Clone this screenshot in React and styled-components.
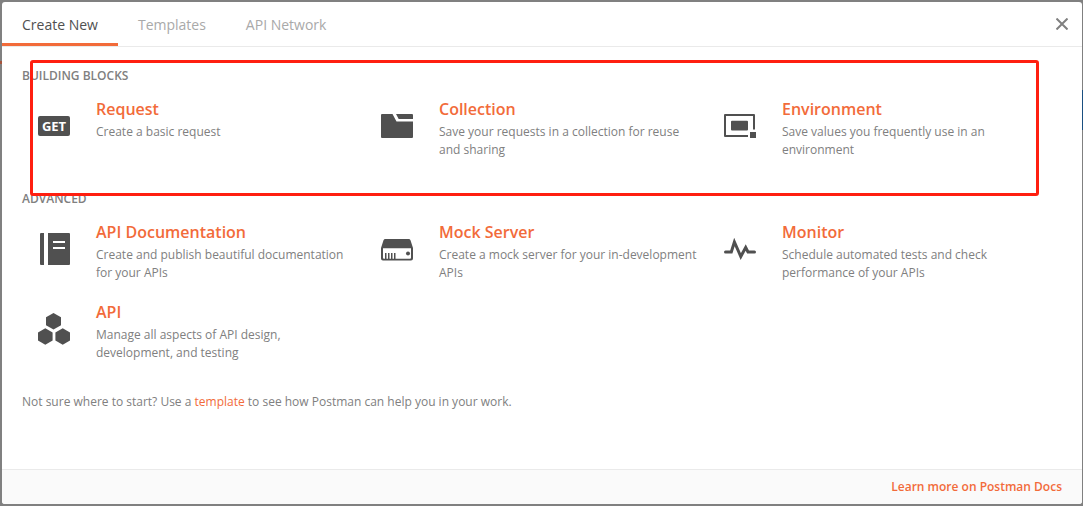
import React from "react";
import styled, { createGlobalStyle } from "styled-components";

const GlobalStyle = createGlobalStyle`
  *, *::before, *::after { box-sizing: border-box; }
  body {
    margin: 0;
    background: #808080;
    font-family: "Open Sans", "Liberation Sans", sans-serif;
    font-size: 12px;
    line-height: 18px;
    color: #808080;
  }
`;

/* The dimmed page stays visible as thin slivers around the dialog. */
const Backdrop = styled.div`
  display: flex;
  min-height: 100vh;
  padding: 2px 1px 2px 2px;
  background:
    linear-gradient(#1a4f80, #1a4f80) right 90px / 1px 40px no-repeat,
    linear-gradient(#a5543c, #a5543c) left 61px / 2px 3px no-repeat,
    #808080;
`;

const Modal = styled.div`
  flex: 1;
  display: flex;
  flex-direction: column;
  background: #fff;
  border-radius: 3px;
  overflow: hidden;
`;

const Header = styled.header`
  display: flex;
  justify-content: space-between;
  align-items: stretch;
  height: 45px;
  border-bottom: 1px solid #eaeaea;
`;

const Tabs = styled.div`
  display: flex;
`;

const Tab = styled.button`
  border: 0;
  border-bottom: 3px solid ${(p) => (p.$active ? "#f26b3a" : "transparent")};
  background: none;
  padding: 4px 20px 0;
  font: inherit;
  font-size: 14px;
  line-height: 20px;
  color: ${(p) => (p.$active ? "#505050" : "#a9a9a9")};
  cursor: pointer;
`;

const CloseButton = styled.button`
  display: flex;
  align-items: center;
  border: 0;
  background: none;
  padding: 0 14px;
  color: #808080;
  cursor: pointer;
`;

const Body = styled.main`
  position: relative;
  flex: 1;
  padding: 20px 31px 48px 20px;
`;

const Section = styled.section`
  margin-bottom: 31px;
`;

const SectionTitle = styled.h2`
  margin: 0 0 12px;
  font-size: 12px;
  line-height: 18px;
  font-weight: 600;
  text-transform: uppercase;
`;

const Grid = styled.div`
  display: grid;
  grid-template-columns: repeat(3, 1fr);
  row-gap: 18px;
`;

const Item = styled.a`
  display: flex;
  gap: 26px;
  padding: 0 8px 0 16px;
  color: inherit;
  text-decoration: none;
`;

const IconBox = styled.span`
  flex: none;
  width: 32px;
  height: 32px;
  margin-top: 13px;
  color: #505050;

  svg { display: block; }
`;

const ItemText = styled.span`
  display: flex;
  flex-direction: column;
  gap: 2px;
`;

const ItemTitle = styled.strong`
  font-size: 16px;
  line-height: 24px;
  font-weight: 600;
  color: #f26b3a;
`;

const Badge = styled.span`
  display: block;
  margin-top: 6px;
  border-radius: 2px;
  background: #505050;
  color: #fff;
  font-size: 13px;
  line-height: 20px;
  font-weight: 700;
  text-align: center;
`;

const Note = styled.p`
  margin: 0;
`;

const Link = styled.a`
  color: #f26b3a;
  font-weight: ${(p) => (p.$strong ? 600 : 400)};
  text-decoration: none;
`;

const Highlight = styled.div`
  position: absolute;
  top: 13px;
  left: 28px;
  right: 43px;
  height: 136px;
  border: 3px solid #ff1f10;
  border-radius: 3px;
  pointer-events: none;
`;

const Footer = styled.footer`
  display: flex;
  justify-content: flex-end;
  align-items: center;
  height: 35px;
  padding: 0 20px;
  border-top: 1px solid #eaeaea;
  background: #fafafa;
`;

const Icon = ({ children }) => (
  <svg width="32" height="32" viewBox="0 0 32 32" fill="currentColor" aria-hidden="true">
    {children}
  </svg>
);

const CollectionIcon = () => (
  <Icon>
    <path d="M1 4h10.500l4 7.600H32V27a1 1 0 0 1-1 1H1a1 1 0 0 1-1-1V5a1 1 0 0 1 1-1z" />
    <path d="M15 4h16a1 1 0 0 1 1 1v4H17.700z" />
  </Icon>
);

const EnvironmentIcon = () => (
  <Icon>
    <path d="M1 4h29a1 1 0 0 1 1 1v14.500h-2V6H2v19h22v2H1a1 1 0 0 1-1-1V5a1 1 0 0 1 1-1z" />
    <rect x="7" y="10.700" width="17" height="9.800" rx="1" />
    <rect x="26" y="22" width="6" height="6" />
  </Icon>
);

const DocumentationIcon = () => (
  <Icon>
    <path d="M3 0h3v32H3a1 1 0 0 1-1-1V1a1 1 0 0 1 1-1z" />
    <path fillRule="evenodd" d="M10 0h21a1 1 0 0 1 1 1v30a1 1 0 0 1-1 1H10zM15 8v2h12V8zM15 14v2h12v-2z" />
  </Icon>
);

const MockServerIcon = () => (
  <Icon>
    <path
      fillRule="evenodd"
      d="M4.500 6h23a2 2 0 0 1 2 1.300L32 15v10.500a2 2 0 0 1-2 2H2a2 2 0 0 1-2-2V15l2.500-7.700A2 2 0 0 1 4.500 6zM2 15.200V24.800a1 1 0 0 0 1 1h26a1 1 0 0 0 1-1V15.200z"
    />
    <path d="M4 20h1.500v6H4zM7 20h1.500v6H7zM10 20h1.500v6H10zM13 20h1.500v6H13z" />
    <circle cx="27" cy="20.400" r="2" />
  </Icon>
);

const MonitorIcon = () => (
  <Icon>
    <path
      d="M1.500 19H7.300L10.400 9 16.800 23.500l4.900-9L24 19H30.500"
      fill="none"
      stroke="currentColor"
      strokeWidth="3"
      strokeLinecap="round"
      strokeMiterlimit="10"
    />
  </Icon>
);

const ApiIcon = () => (
  <Icon>
    <path d="M15.500 0L23 4.200v8.100l-7.500 4.200L8 12.300V4.200z" />
    <path d="M7.300 15.200l7.300 4.200v8.200l-7.300 4.200L0 27.600v-8.200z" />
    <path d="M24.700 15.200l7.300 4.200v8.200l-7.300 4.200-7.300-4.200v-8.200z" />
  </Icon>
);

const buildingBlocks = [
  { title: "Request", text: "Create a basic request", icon: <Badge>GET</Badge> },
  { title: "Collection", text: "Save your requests in a collection for reuse and sharing", icon: <CollectionIcon /> },
  { title: "Environment", text: "Save values you frequently use in an environment", icon: <EnvironmentIcon /> },
];

const advanced = [
  { title: "API Documentation", text: "Create and publish beautiful documentation for your APIs", icon: <DocumentationIcon /> },
  { title: "Mock Server", text: "Create a mock server for your in-development APIs", icon: <MockServerIcon /> },
  { title: "Monitor", text: "Schedule automated tests and check performance of your APIs", icon: <MonitorIcon /> },
  { title: "API", text: "Manage all aspects of API design, development, and testing", icon: <ApiIcon /> },
];

const ItemSection = ({ title, items }) => (
  <Section>
    <SectionTitle>{title}</SectionTitle>
    <Grid>
      {items.map((item) => (
        <Item href="#" key={item.title}>
          <IconBox>{item.icon}</IconBox>
          <ItemText>
            <ItemTitle>{item.title}</ItemTitle>
            <span>{item.text}</span>
          </ItemText>
        </Item>
      ))}
    </Grid>
  </Section>
);

export default function App() {
  return (
    <Backdrop>
      <GlobalStyle />
      <Modal role="dialog" aria-label="Create New">
        <Header>
          <Tabs role="tablist">
            <Tab role="tab" aria-selected="true" $active>Create New</Tab>
            <Tab role="tab" aria-selected="false">Templates</Tab>
            <Tab role="tab" aria-selected="false">API Network</Tab>
          </Tabs>
          <CloseButton aria-label="Close">
            <svg width="12" height="12" viewBox="0 0 12 12" stroke="currentColor" strokeWidth="2" aria-hidden="true">
              <path d="M0.500 0.500l11 11M11.500 0.500l-11 11" />
            </svg>
          </CloseButton>
        </Header>
        <Body>
          <ItemSection title="Building Blocks" items={buildingBlocks} />
          <ItemSection title="Advanced" items={advanced} />
          <Note>
            Not sure where to start? Use a <Link href="#">template</Link> to see how Postman can help you in your work.
          </Note>
          <Highlight />
        </Body>
        <Footer>
          <Link href="#" $strong>Learn more on Postman Docs</Link>
        </Footer>
      </Modal>
    </Backdrop>
  );
}
